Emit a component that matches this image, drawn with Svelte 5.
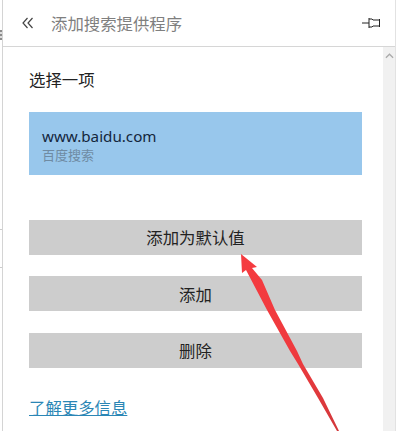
<script>
  const buttons = ['添加为默认值', '添加', '删除']
</script>

<div class="page">
  <div class="edge">
    <span class="tick"></span>
    <span class="rule first"></span>
    <span class="rule second"></span>
  </div>
  <div class="panel">
    <header class="head">
      <svg class="back" width="12" height="12" viewBox="0 0 12 12" fill="none" stroke="#444" stroke-width="1.2">
        <path d="M5.5 1 L1 6 L5.5 11" />
        <path d="M10.5 1 L6 6 L10.5 11" />
      </svg>
      <span class="title">添加搜索提供程序</span>
      <svg class="pin" width="19" height="12" viewBox="0 0 19 12" fill="none" stroke="#222" stroke-width="1">
        <path d="M0 6 H7" />
        <path d="M7 1 V11" />
        <path d="M7 2 H10 L11 3 H17.5 M17.5 2 V10 M7 10 H10 L11 9 H17.5" />
      </svg>
    </header>
    <div class="body">
      <main class="content">
        <h2 class="pick">选择一项</h2>
        <div class="item">
          <div class="url">www.baidu.com</div>
          <div class="name">百度搜索</div>
        </div>
        <div class="actions">
          {#each buttons as label}
            <button>{label}</button>
          {/each}
        </div>
        <a class="more" href="#more">了解更多信息</a>
      </main>
      <div class="scroll">
        <svg width="9" height="6" viewBox="0 0 10 6" fill="none" stroke="#aaa" stroke-width="1.4">
          <path d="M1 5 L5 1 L9 5" />
        </svg>
      </div>
    </div>
  </div>
  <svg class="arrow" width="100" height="177" viewBox="0 0 100 177">
    <defs>
      <linearGradient id="arrowFill" x1="0" y1="0" x2="0" y2="1">
        <stop offset="0" stop-color="#f53b40" />
        <stop offset="0.55" stop-color="#ef3a3e" />
        <stop offset="1" stop-color="#d2383b" />
      </linearGradient>
    </defs>
    <path d="M1 0 L17 13 L12 14 L22 26 L35 56 L57 97 L63 110 L83 144 L99 177 L97 177 L78 144 L58 110 L50 97 L27 56 L6 16 L2 19 Z" fill="url(#arrowFill)" />
  </svg>
</div>

<style>
  :global(body) {
    margin: 0;
    background: #fff;
  }

  .page {
    position: relative;
    display: flex;
    width: 400px;
    height: 431px;
    overflow: hidden;
    font-family: "Noto Sans CJK SC", "Liberation Sans", sans-serif;
  }

  .edge {
    position: relative;
    width: 2px;
    border-right: 1px solid #d4d4d4;
    flex: none;
  }

  .tick {
    position: absolute;
    top: 30px;
    left: 0;
    width: 2px;
    height: 10px;
    background: repeating-linear-gradient(#8c8c8c 0 2px, #ddd 2px 4px);
  }

  .rule {
    position: absolute;
    left: 0;
    width: 2px;
    height: 1px;
    background: #ccc;
  }

  .first {
    top: 229px;
  }

  .second {
    top: 267px;
  }

  .panel {
    display: flex;
    flex-direction: column;
    width: 392px;
    border-right: 1px solid #e2e2e2;
  }

  .head {
    display: flex;
    align-items: center;
    height: 47px;
    flex: none;
    box-sizing: border-box;
    padding: 0 14px 1px 19px;
    border-bottom: 1px solid #d6d6d6;
  }

  .title {
    margin-left: 17px;
    font-size: 16.4px;
    color: #7f7f7f;
  }

  .pin {
    margin-left: auto;
  }

  .body {
    display: flex;
    flex: 1;
  }

  .content {
    flex: 1;
    padding: 21px 21px 0 26px;
  }

  .pick {
    margin: 0;
    font-size: 16.4px;
    font-weight: 400;
    line-height: 22px;
    color: #222;
  }

  .item {
    box-sizing: border-box;
    height: 63px;
    margin-top: 22px;
    padding: 14px 13px 0;
    background: #98c7ec;
  }

  .url {
    font-family: "Noto Sans", "Liberation Sans", sans-serif;
    font-size: 15.2px;
    line-height: 20px;
    color: #14263c;
  }

  .name {
    font-size: 13px;
    line-height: 18px;
    color: #6f8ba3;
  }

  .actions {
    display: flex;
    flex-direction: column;
    gap: 21.5px;
    margin-top: 44.5px;
  }

  button {
    height: 35px;
    padding: 0;
    border: none;
    background: #cdcdcd;
    font: inherit;
    font-size: 16.4px;
    color: #222;
  }

  .more {
    display: inline-block;
    margin-top: 28px;
    font-size: 16.4px;
    line-height: 22px;
    color: #2b86b5;
  }

  .scroll {
    display: flex;
    justify-content: center;
    width: 12px;
    padding-top: 6px;
    background: #f1f1f1;
  }

  .scroll svg {
    display: block;
  }

  .arrow {
    position: absolute;
    top: 254px;
    left: 240px;
    pointer-events: none;
  }
</style>
